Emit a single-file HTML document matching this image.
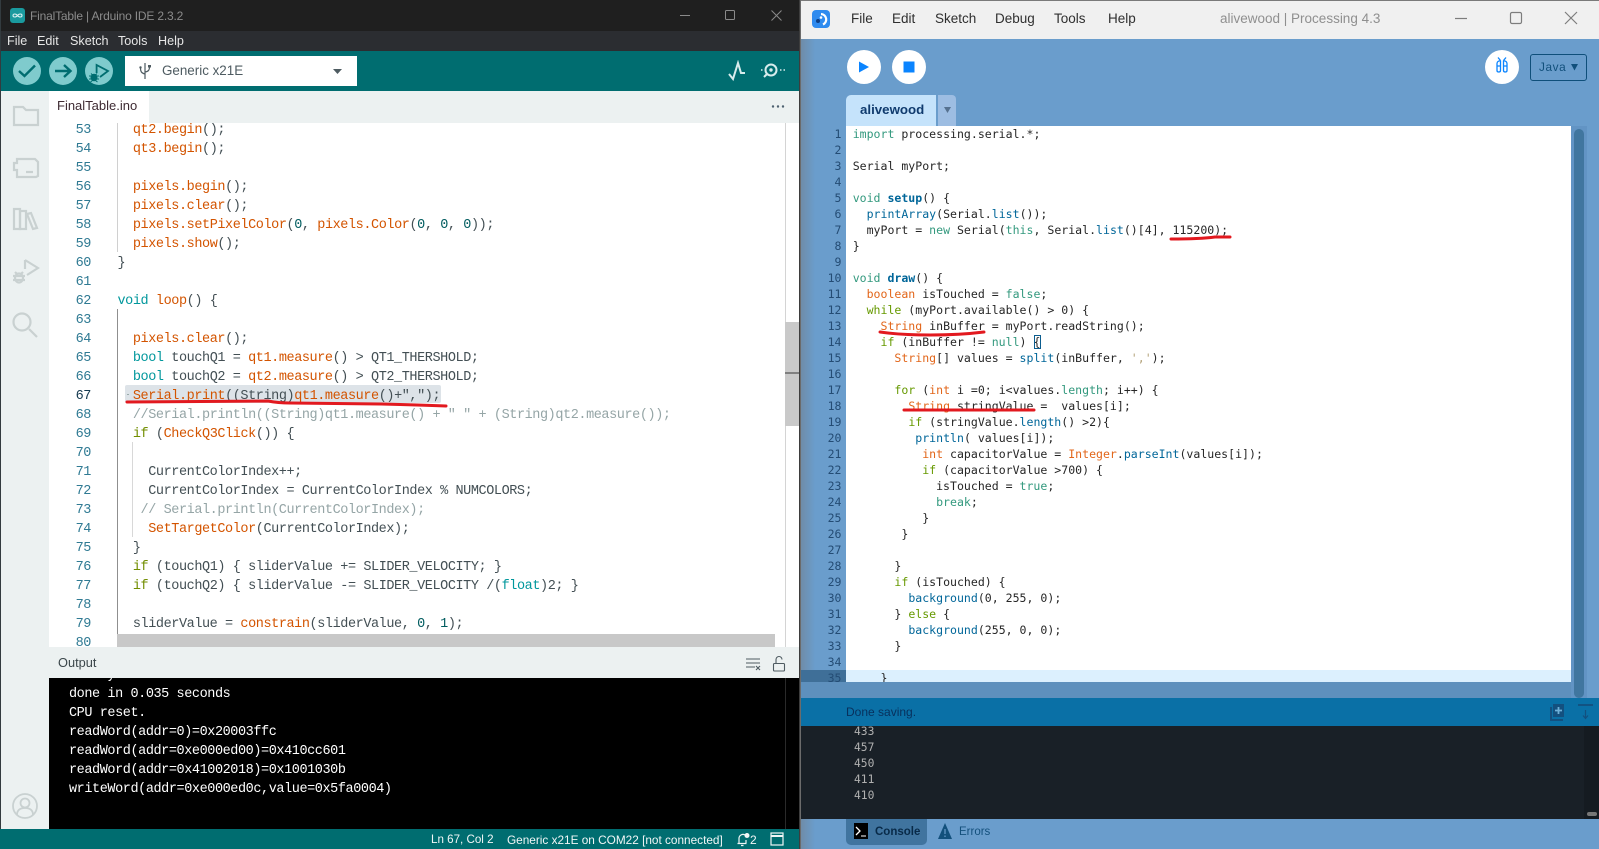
<!DOCTYPE html>
<html lang="en"><head><meta charset="utf-8"><title>Arduino and Processing</title>
<style>
html,body{margin:0;padding:0;width:1599px;height:849px;overflow:hidden;background:#000}
*{box-sizing:border-box}
.a{position:absolute}
.t{position:absolute;white-space:pre;font-family:"Liberation Sans",sans-serif}
.ar{position:absolute;font-family:"Liberation Mono",monospace;font-size:13.5px;letter-spacing:-.42px;line-height:19px;white-space:pre;color:#434f54}
.ar i,.ar b,.pr i,.pr b{font-style:normal;font-weight:normal}
.ar .f{color:#d35400}.ar .k{color:#00979c}.ar .g{color:#728e00}.ar .c{color:#95a5a6}.ar .n{color:#005c5f}
.pr{position:absolute;font-family:"DejaVu Sans Mono",monospace;font-size:11.55px;line-height:16px;white-space:pre;color:#262626}
.pr .f{color:#006699}.pr .b{color:#006699;font-weight:bold}.pr .k{color:#33997e}.pr .g{color:#669900}.pr .o{color:#e2661a}.pr .s{color:#b3a27a}
</style></head><body>

<!-- ARDUINO WINDOW -->
<div class="a" style="left:0;top:0;width:800px;height:849px;background:#fff;overflow:hidden">
<div class="a" style="left:0;top:0;width:800px;height:31px;background:#1f1f1f"></div>
<div class="a" style="left:0;top:31px;width:800px;height:20px;background:#2b2d31"></div>
<div class="a" style="left:0;top:51px;width:800px;height:40px;background:#006d70"></div>
<div class="a" style="left:0;top:91px;width:800px;height:32px;background:#ecf1f1"></div>
<div class="a" style="left:0;top:91px;width:49px;height:738px;background:#ecf1f1"></div>
<div class="a" style="left:0;top:0;width:1px;height:849px;background:#333b3f"></div>

<svg class="a" style="left:10px;top:8px" width="15" height="15" viewBox="0 0 15 15"><rect width="15" height="15" rx="3" fill="#1a9a9e"/><path d="M7.5 7.5C6 5.5 3 5.5 3 7.5s3 2 4.5 0 4.5-2 4.5 0-3 2-4.5 0" fill="none" stroke="#d8f0f0" stroke-width="1.1"/></svg>
<div class="t" style="left:30px;top:8px;font-size:12px;letter-spacing:-.18px;line-height:16px;color:#8b8b8b">FinalTable | Arduino IDE 2.3.2</div>
<svg class="a" style="left:670px;top:5px" width="125" height="22" viewBox="0 0 125 22" fill="none" stroke="#8a8a8a" stroke-width="1"><path d="M10 10.5h10"/><rect x="55.5" y="5.5" width="9" height="9" rx="1"/><path d="M101.500 5.500l10 10M111.500 5.500l-10 10"/></svg>

<div class="t" style="left:7px;top:33px;font-size:12.6px;line-height:16px;color:#e6e6e6">File</div>
<div class="t" style="left:37px;top:33px;font-size:12.6px;line-height:16px;color:#e6e6e6">Edit</div>
<div class="t" style="left:70px;top:33px;font-size:12.600px;line-height:16px;color:#e6e6e6">Sketch</div>
<div class="t" style="left:118px;top:33px;font-size:12.6px;line-height:16px;color:#e6e6e6">Tools</div>
<div class="t" style="left:158px;top:33px;font-size:12.6px;line-height:16px;color:#e6e6e6">Help</div>

<svg class="a" style="left:12px;top:56px" width="104" height="30" viewBox="0 0 104 30">
<circle cx="15" cy="15" r="14" fill="#7fcbcd"/><circle cx="51" cy="15" r="14" fill="#7fcbcd"/><circle cx="87" cy="15" r="14" fill="#7fcbcd"/>
<path d="M7 15l5.500 5 10.500-10.500" fill="none" stroke="#006d70" stroke-width="2.400"/>
<path d="M43 15h15M52 9l6.500 6-6.500 6" fill="none" stroke="#006d70" stroke-width="2.400"/>
<path d="M84.600 17V9L96 15l-8 6" fill="none" stroke="#006d70" stroke-width="1.800"/>
<ellipse cx="82" cy="21.500" rx="3.500" ry="3.800" fill="#006d70"/><path d="M77 20h10M77 23h10M78.500 26l2-1.500M85.500 26l-2-1.500M79 17.500l1.500 1.500M85 17.500l-1.500 1.500" stroke="#006d70" stroke-width="1"/>
</svg>
<div class="a" style="left:125px;top:56px;width:232px;height:30px;background:#fff"></div>
<svg class="a" style="left:138px;top:62px" width="14" height="18" viewBox="0 0 14 18" fill="none" stroke="#4e5b61" stroke-width="1.200"><path d="M7 1v16M7 12C3 11 2.500 9 2.500 6M7 10c3.500-.5 4.500-2 4.500-5"/><rect x="10" y="3" width="3" height="2.500" fill="#4e5b61" stroke="none"/><circle cx="2.500" cy="5.500" r="1.200" fill="#4e5b61" stroke="none"/></svg>
<div class="t" style="left:162px;top:63px;font-size:13.400px;line-height:16px;color:#4e5b61">Generic x21E</div>
<svg class="a" style="left:333px;top:69px" width="10" height="6"><path d="M0 0h9l-4.500 5z" fill="#4e5b61"/></svg>

<svg class="a" style="left:726px;top:60px" width="24" height="22" viewBox="0 0 24 22" fill="none" stroke="#d7ecec" stroke-width="2"><path d="M3 14l4 5 5-16 3 10h4"/></svg>
<svg class="a" style="left:760px;top:59px" width="27" height="22" viewBox="0 0 27 22" fill="none" stroke="#d7ecec"><circle cx="11" cy="11" r="5.500" stroke-width="2"/><circle cx="11" cy="11" r="1.700" fill="#d7ecec" stroke="none"/><path d="M7 15l-3 3" stroke-width="2"/><path d="M1 11h1.500M20 11h1.500M23.500 11h1.500" stroke-width="1.500"/></svg>

<div class="a" style="left:49px;top:91px;width:100px;height:32px;background:#fff"></div>
<div class="t" style="left:57px;top:98px;font-size:13px;line-height:16px;color:#3e2b33">FinalTable.ino</div>
<svg class="a" style="left:771px;top:104px" width="14" height="5"><g fill="#4d6070"><circle cx="2" cy="2.500" r="1.200"/><circle cx="7" cy="2.500" r="1.200"/><circle cx="12" cy="2.500" r="1.200"/></g></svg>

<svg class="a" style="left:12px;top:104px" width="28" height="234" viewBox="0 0 28 234" fill="none" stroke="#c9d1d1" stroke-width="2.200">
<path d="M2 3h9l3 3h12v15H2z"/>
<path d="M5 55h18l3 3v14l-2 1H5v-7H2v-7h3zM14 68h7"/>
<rect x="2" y="105" width="6" height="20"/><rect x="8" y="107" width="6" height="18"/><path d="M15 110l4-1 6 15-4 1z"/>
<path d="M13 156l13 8-11 7M13 156v9"/><ellipse cx="7" cy="174" rx="4" ry="4.500"/><path d="M1 172h12M1 176h12M3 168l2 2M11 168l-2 2"/>
<circle cx="10" cy="218" r="8.500"/><path d="M17 225l8 8"/>
</svg>

<!-- selection -->
<div class="a" style="left:125px;top:385px;width:316px;height:18px;background:#dde3e8;border-radius:2px"></div>
<div class="a" style="left:127px;top:394px;width:2px;height:1px;background:#9aa"></div>
<!-- guides -->
<div class="a" style="left:117px;top:123px;width:1px;height:129px;background:#d0d0d0"></div>
<div class="a" style="left:117px;top:309px;width:1px;height:325px;background:#8f8f8f"></div>
<div class="a" style="left:132px;top:442px;width:1px;height:95px;background:#d8d8d8"></div>

<div class="a" style="left:49px;top:123px;width:736px;height:524px;overflow:hidden">
<div class="ar" style="left:0;top:-2.500px;width:42px;text-align:right;color:#2f7a93;letter-spacing:-.42px">53
54
55
56
57
58
59
60
61
62
63
64
65
66
<span style="color:#163a50">67</span>
68
69
70
71
72
73
74
75
76
77
78
79
80</div>
<div class="ar" style="left:68.500px;top:-2.500px">  <i class="f">qt2.begin</i>();
  <i class="f">qt3.begin</i>();

  <i class="f">pixels.begin</i>();
  <i class="f">pixels.clear</i>();
  <i class="f">pixels.setPixelColor</i>(<i class="n">0</i>, <i class="f">pixels.Color</i>(<i class="n">0</i>, <i class="n">0</i>, <i class="n">0</i>));
  <i class="f">pixels.show</i>();
}

<i class="k">void</i> <i class="f">loop</i>() {

  <i class="f">pixels.clear</i>();
  <i class="k">bool</i> touchQ1 = <i class="f">qt1.measure</i>() &gt; QT1_THERSHOLD;
  <i class="k">bool</i> touchQ2 = <i class="f">qt2.measure</i>() &gt; QT2_THERSHOLD;
  <i class="f">Serial.print</i>((String)<i class="f">qt1.measure</i>()+",");
  <i class="c">//Serial.println((String)qt1.measure() + " " + (String)qt2.measure());</i>
  <i class="g">if</i> (<i class="f">CheckQ3Click</i>()) {

    CurrentColorIndex++;
    CurrentColorIndex = CurrentColorIndex % NUMCOLORS;
   <i class="c">// Serial.println(CurrentColorIndex);</i>
    <i class="f">SetTargetColor</i>(CurrentColorIndex);
  }
  <i class="g">if</i> (touchQ1) { sliderValue += SLIDER_VELOCITY; }
  <i class="g">if</i> (touchQ2) { sliderValue -= SLIDER_VELOCITY /(<i class="k">float</i>)2; }

  sliderValue = <i class="f">constrain</i>(sliderValue, <i class="n">0</i>, <i class="n">1</i>);</div>
</div>

<div class="a" style="left:117px;top:634px;width:658px;height:13px;background:#c8c8c8"></div>
<div class="a" style="left:785px;top:123px;width:1px;height:524px;background:#d4d4d4"></div>
<div class="a" style="left:785px;top:322px;width:14px;height:104px;background:#c9c9c9"></div>
<div class="a" style="left:785px;top:372px;width:14px;height:1.500px;background:#808080"></div>

<div class="a" style="left:49px;top:647px;width:750px;height:31px;background:#ecf1f1"></div>
<div class="t" style="left:58px;top:655px;font-size:12.800px;line-height:16px;color:#3c474b">Output</div>
<svg class="a" style="left:745px;top:655px" width="42" height="18" viewBox="0 0 42 18" fill="none" stroke="#4e5b61" stroke-width="1.100"><path d="M1 4h14M1 8h14M1 12h9M1 15.500h0"/><path d="M11 11l4 4M15 11l-4 4"/><rect x="28.500" y="8.500" width="11" height="7.500" rx="1"/><path d="M31 8.500V4.500a3 3 0 0 1 6 0"/></svg>

<div class="a" style="left:49px;top:678px;width:750px;height:151px;background:#000;overflow:hidden">
<div class="ar" style="left:20px;top:-12.500px;color:#fff">Verify successful
done in 0.035 seconds
CPU reset.
readWord(addr=0)=0x20003ffc
readWord(addr=0xe000ed00)=0x410cc601
readWord(addr=0x41002018)=0x1001030b
writeWord(addr=0xe000ed0c,value=0x5fa0004)</div>
</div>
<div class="a" style="left:785px;top:678px;width:1px;height:151px;background:#2a2a2a"></div>
<svg class="a" style="left:12px;top:793px" width="26" height="26" viewBox="0 0 26 26" fill="none" stroke="#c9d1d1" stroke-width="1.800"><circle cx="13" cy="13" r="12"/><circle cx="13" cy="10" r="4.500"/><path d="M5 22c0-5 3-7 8-7s8 2 8 7"/></svg>

<div class="a" style="left:0;top:829px;width:800px;height:20px;background:#006d70"></div>
<div class="t" style="left:431px;top:832px;font-size:11.600px;line-height:16px;color:#f0f6f6">Ln 67, Col 2</div>
<div class="t" style="left:507px;top:832px;font-size:11.800px;line-height:16px;color:#f0f6f6">Generic x21E on COM22 [not connected]</div>
<svg class="a" style="left:736px;top:832px" width="14" height="15" viewBox="0 0 14 15" fill="none" stroke="#f0f6f6" stroke-width="1.200"><path d="M3 11V6a4 4 0 0 1 6-3M1.500 11.500h9M5 13.500h2.500M10 8v3"/><circle cx="11" cy="3.500" r="2.500" fill="#f0f6f6" stroke="none"/></svg>
<div class="t" style="left:750px;top:832px;font-size:12px;line-height:16px;color:#f0f6f6">2</div>
<svg class="a" style="left:770px;top:832px" width="14" height="14" viewBox="0 0 14 14" fill="none" stroke="#f0f6f6" stroke-width="1.200"><rect x="1" y="1" width="12" height="12"/><path d="M1 4h12" stroke-width="2"/></svg>
<div class="a" style="left:799px;top:0;width:1px;height:849px;background:#3d3d3d"></div>
</div>

<!-- PROCESSING WINDOW -->
<div class="a" style="left:800px;top:0;width:799px;height:849px;background:#6a9dcc;overflow:hidden">
<div class="a" style="left:0;top:0;width:799px;height:39px;background:#f0f0f0"></div>
<div class="a" style="left:0;top:0;width:799px;height:1px;background:#7a7a7a"></div>
<div class="a" style="left:0;top:0;width:1px;height:849px;background:#6b6b6b"></div>
<div class="a" style="left:1px;top:39px;width:14px;height:810px;background:linear-gradient(90deg,#6f8ca8,#6a9dcc)"></div>
<svg class="a" style="left:12px;top:10px" width="18" height="18" viewBox="0 0 18 18"><rect width="18" height="18" rx="4" fill="#2f8bef"/><path d="M9 4a5.500 5.500 0 0 1 2 10.500" fill="none" stroke="#fff" stroke-width="2.200"/><circle cx="6" cy="11" r="2" fill="#0c3f87"/><circle cx="9" cy="7.500" r="1.300" fill="#fff"/></svg>
<div class="t" style="left:51px;top:11px;font-size:13.500px;line-height:16px;color:#2f2f2f">File</div>
<div class="t" style="left:92px;top:11px;font-size:13.500px;line-height:16px;color:#2f2f2f">Edit</div>
<div class="t" style="left:135px;top:11px;font-size:13.500px;line-height:16px;color:#2f2f2f">Sketch</div>
<div class="t" style="left:195px;top:11px;font-size:13.500px;line-height:16px;color:#2f2f2f">Debug</div>
<div class="t" style="left:254px;top:11px;font-size:13.500px;line-height:16px;color:#2f2f2f">Tools</div>
<div class="t" style="left:308px;top:11px;font-size:13.500px;line-height:16px;color:#2f2f2f">Help</div>
<div class="t" style="left:420px;top:11px;font-size:13.500px;line-height:16px;color:#8f8f8f">alivewood | Processing 4.3</div>
<svg class="a" style="left:650px;top:5px" width="140" height="28" viewBox="0 0 140 28" fill="none" stroke="#7d7d7d" stroke-width="1.200"><path d="M5 13.500h12"/><rect x="60.500" y="7.500" width="11" height="11" rx="1.500"/><path d="M115 7l12 12M127 7l-12 12"/></svg>

<svg class="a" style="left:46px;top:50px" width="700" height="34" viewBox="0 0 700 34"><circle cx="18" cy="17" r="17" fill="#fff"/><circle cx="63" cy="17" r="17" fill="#fff"/><path d="M13 11.500v11l10-5.500z" fill="#0a84ff"/><rect x="57.500" y="11.500" width="11" height="11" fill="#0a84ff"/><circle cx="656" cy="17" r="17" fill="#fff"/><g fill="none" stroke="#0a84ff" stroke-width="1.300"><path d="M654.500 11c-2-.5-3.500 1-3.500 2.500v7c0 2 3.500 2 3.500 0zM657.500 11c2-.5 3.500 1 3.500 2.500v7c0 2-3.500 2-3.500 0zM651 16h3.500M657.500 16h3.500M652 7.500l2.500 3M660 7.500l-2.500 3"/></g></svg>
<div class="a" style="left:730px;top:54px;width:57px;height:27px;border:1px solid #0f4f7a;border-radius:3px"></div>
<div class="t" style="left:739px;top:59px;font-size:11.800px;line-height:16px;letter-spacing:.6px;color:#12507c">Java</div>
<svg class="a" style="left:771px;top:64px" width="8" height="8"><path d="M0 0h7l-3.500 6.500z" fill="#12507c"/></svg>

<div class="a" style="left:46px;top:95px;width:90px;height:31px;background:#c5e3fb;border-radius:5px 0 0 0"></div>
<div class="t" style="left:60px;top:102px;font-size:13.300px;line-height:16px;font-weight:bold;color:#103b6e">alivewood</div>
<div class="a" style="left:138px;top:95px;width:18px;height:31px;background:#9dbde2;border-radius:0 4px 0 0"></div>
<svg class="a" style="left:144px;top:107px" width="8" height="8"><path d="M0 0h7l-3.500 6z" fill="#56718f"/></svg>

<div class="a" style="left:46px;top:126px;width:726px;height:556px;background:#fff"></div>
<div class="a" style="left:46px;top:670px;width:726px;height:12px;background:#dcf0fe"></div>
<div class="a" style="left:1px;top:670px;width:45px;height:12px;background:#3f6f98"></div>
<div class="a" style="left:771px;top:126px;width:16px;height:572px;background:#6294c4"></div>
<div class="a" style="left:774px;top:129px;width:10px;height:569px;background:#40769f;border-radius:5px"></div>
<div class="a" style="left:1px;top:682px;width:770px;height:16px;background:#5e90bd"></div>

<div class="a" style="left:1px;top:126px;width:771px;height:556px;overflow:hidden">
<div class="pr" style="left:0;top:0;width:40.500px;text-align:right;color:#244c74">1
2
3
4
5
6
7
8
9
10
11
12
13
14
15
16
17
18
19
20
21
22
23
24
25
26
27
28
29
30
31
32
33
34
35</div>
<div class="pr" style="left:51.700px;top:0"><i class="k">import</i> processing.serial.*;

Serial myPort;

<i class="k">void</i> <b class="b">setup</b>() {
  <i class="f">printArray</i>(Serial.<i class="f">list</i>());
  myPort = <i class="k">new</i> Serial(<i class="k">this</i>, Serial.<i class="f">list</i>()[4], 115200);
}

<i class="k">void</i> <b class="b">draw</b>() {
  <i class="o">boolean</i> isTouched = <i class="k">false</i>;
  <i class="g">while</i> (myPort.available() &gt; 0) {
    <i class="o">String</i> inBuffer = myPort.readString();
    <i class="g">if</i> (inBuffer != <i class="k">null</i>) {
      <i class="o">String</i>[] values = <i class="f">split</i>(inBuffer, <i class="s">','</i>);

      <i class="g">for</i> (<i class="o">int</i> i =0; i&lt;values.<i class="k">length</i>; i++) {
        <i class="o">String</i> stringValue =  values[i];
        <i class="g">if</i> (stringValue.<i class="f">length</i>() &gt;2){
         <i class="f">println</i>( values[i]);
          <i class="o">int</i> capacitorValue = <i class="o">Integer</i>.<i class="f">parseInt</i>(values[i]);
          <i class="g">if</i> (capacitorValue &gt;700) {
            isTouched = <i class="k">true</i>;
            <i class="k">break</i>;
          }
       }

      }
      <i class="g">if</i> (isTouched) {
        <i class="f">background</i>(0, 255, 0);
      } <i class="g">else</i> {
        <i class="f">background</i>(255, 0, 0);
      }

    }</div>
</div>
<div class="a" style="left:234px;top:335px;width:7px;height:14px;border:1px solid #0b5d8f"></div>

<div class="a" style="left:1px;top:698px;width:798px;height:28px;background:#0a70a6"></div>
<div class="t" style="left:46px;top:704px;font-size:12px;line-height:16px;color:#08305c">Done saving.</div>
<svg class="a" style="left:750px;top:703px" width="44" height="18" viewBox="0 0 44 18"><g fill="#13507f"><path d="M0 4h2v12h11v2H0z"/><rect x="3" y="1" width="11" height="13"/></g><path d="M8.500 4v7M5 7.500h7" stroke="#6fb0d8" stroke-width="1.800"/><path d="M28 2h15" stroke="#13507f" stroke-width="1.800"/><path d="M35.500 7v8M33 12.500l2.500 3 2.500-3" stroke="#13507f" stroke-width="1.200" fill="none"/></svg>

<div class="a" style="left:1px;top:726px;width:798px;height:93px;background:#192027"></div>
<div class="a" style="left:784px;top:726px;width:15px;height:93px;background:#151b21"></div>
<div class="a" style="left:787px;top:812px;width:10px;height:4px;background:#777;border-radius:2px"></div>
<div class="pr" style="left:54px;top:724px;color:#b0b0b0;font-size:11.300px">433
457
450
411
410</div>

<div class="a" style="left:46px;top:819px;width:81px;height:26px;background:#40749f;border-radius:0 0 5px 5px"></div>
<svg class="a" style="left:54px;top:823px" width="14" height="16" viewBox="0 0 14 16"><rect width="14" height="16" fill="#000"/><path d="M2 4l4 4-4 4" fill="none" stroke="#fff" stroke-width="1.300"/><path d="M7 13h5" stroke="#fff"/></svg>
<div class="t" style="left:75px;top:824px;font-size:11.500px;line-height:16px;font-weight:bold;color:#082a48">Console</div>
<svg class="a" style="left:138px;top:823px" width="14" height="16" viewBox="0 0 14 16"><path d="M7 0l7 16H0z" fill="#12507c"/><path d="M7 6v5M7 12.500v1.500" stroke="#6a9dcc" stroke-width="1.200"/></svg>
<div class="t" style="left:159px;top:824px;font-size:11.500px;line-height:16px;color:#14507c">Errors</div>
</div>

<!-- RED ANNOTATIONS -->
<svg class="a" style="left:0;top:0;pointer-events:none" width="1599" height="849" viewBox="0 0 1599 849" fill="none" stroke="#e2191f" stroke-width="3" stroke-linecap="round">
<path d="M127 402L268 401Q278 403 290 403L380 404Q420 405 446 406"/>
<path d="M1171 239Q1200 239 1215 237L1230 237"/>
<path d="M880 332Q900 335 930 335Q960 335 984 332"/>
<path d="M904 410L1034 410"/>
</svg>
</body></html>
